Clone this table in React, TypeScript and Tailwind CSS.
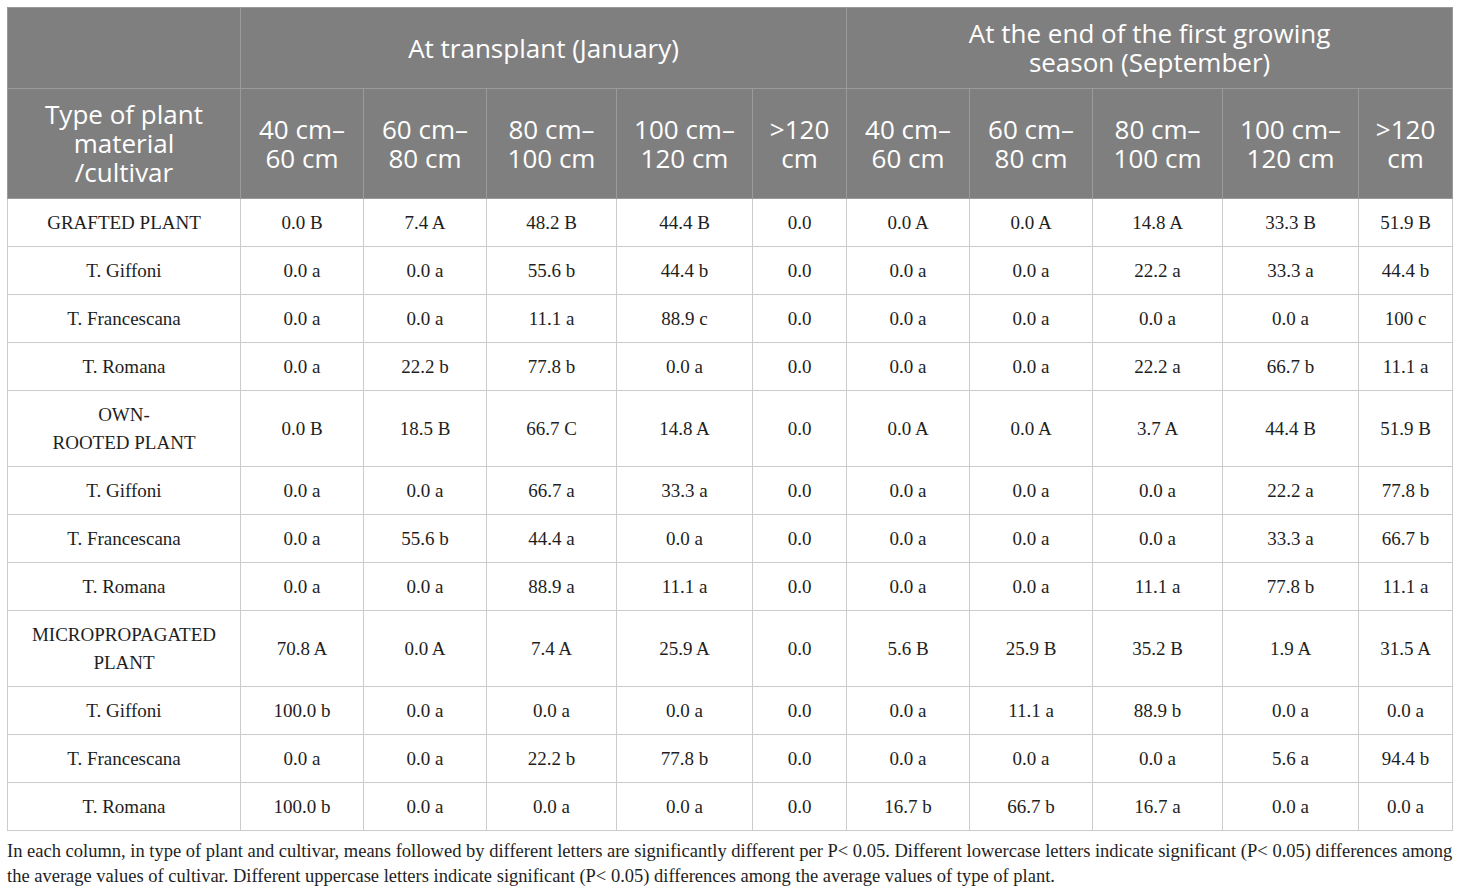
const widths = [233, 123, 123, 130, 136, 94, 123, 123, 130, 136, 94];

const sizes = [
  ['40 cm–', '60 cm'],
  ['60 cm–', '80 cm'],
  ['80 cm–', '100 cm'],
  ['100 cm–', '120 cm'],
  ['>120', 'cm'],
];

type Row = { label: string[]; values: string[]; tall?: boolean };

const rows: Row[] = [
  { label: ['GRAFTED PLANT'], values: ['0.0 B', '7.4 A', '48.2 B', '44.4 B', '0.0', '0.0 A', '0.0 A', '14.8 A', '33.3 B', '51.9 B'] },
  { label: ['T. Giffoni'], values: ['0.0 a', '0.0 a', '55.6 b', '44.4 b', '0.0', '0.0 a', '0.0 a', '22.2 a', '33.3 a', '44.4 b'] },
  { label: ['T. Francescana'], values: ['0.0 a', '0.0 a', '11.1 a', '88.9 c', '0.0', '0.0 a', '0.0 a', '0.0 a', '0.0 a', '100 c'] },
  { label: ['T. Romana'], values: ['0.0 a', '22.2 b', '77.8 b', '0.0 a', '0.0', '0.0 a', '0.0 a', '22.2 a', '66.7 b', '11.1 a'] },
  { label: ['OWN-', 'ROOTED PLANT'], tall: true, values: ['0.0 B', '18.5 B', '66.7 C', '14.8 A', '0.0', '0.0 A', '0.0 A', '3.7 A', '44.4 B', '51.9 B'] },
  { label: ['T. Giffoni'], values: ['0.0 a', '0.0 a', '66.7 a', '33.3 a', '0.0', '0.0 a', '0.0 a', '0.0 a', '22.2 a', '77.8 b'] },
  { label: ['T. Francescana'], values: ['0.0 a', '55.6 b', '44.4 a', '0.0 a', '0.0', '0.0 a', '0.0 a', '0.0 a', '33.3 a', '66.7 b'] },
  { label: ['T. Romana'], values: ['0.0 a', '0.0 a', '88.9 a', '11.1 a', '0.0', '0.0 a', '0.0 a', '11.1 a', '77.8 b', '11.1 a'] },
  { label: ['MICROPROPAGATED', 'PLANT'], tall: true, values: ['70.8 A', '0.0 A', '7.4 A', '25.9 A', '0.0', '5.6 B', '25.9 B', '35.2 B', '1.9 A', '31.5 A'] },
  { label: ['T. Giffoni'], values: ['100.0 b', '0.0 a', '0.0 a', '0.0 a', '0.0', '0.0 a', '11.1 a', '88.9 b', '0.0 a', '0.0 a'] },
  { label: ['T. Francescana'], values: ['0.0 a', '0.0 a', '22.2 b', '77.8 b', '0.0', '0.0 a', '0.0 a', '0.0 a', '5.6 a', '94.4 b'] },
  { label: ['T. Romana'], values: ['100.0 b', '0.0 a', '0.0 a', '0.0 a', '0.0', '16.7 b', '66.7 b', '16.7 a', '0.0 a', '0.0 a'] },
];

export default function App() {
  return (
    <div className="bg-white w-[1460px] h-[895px] pt-[7px] pl-[7px] font-['Liberation_Serif',serif] text-[#1e1e1e]">
      <table className="table-fixed border-collapse w-[1446px]">
        <colgroup>
          {widths.map((w, i) => (
            <col key={i} style={{ width: w }} />
          ))}
        </colgroup>
        <thead className="bg-[#7f7f7f] text-white font-['Open_Sans',sans-serif] text-[26px] leading-[29px]">
          <tr className="h-[81px]">
            <th className="border border-[#9a9a9a] font-normal" />
            <th colSpan={5} className="border border-[#9a9a9a] font-normal px-2">
              At transplant (January)
            </th>
            <th colSpan={5} className="border border-[#9a9a9a] font-normal px-2">
              At the end of the first growing
              <br />
              season (September)
            </th>
          </tr>
          <tr className="h-[110px]">
            <th className="border border-[#9a9a9a] font-normal">
              Type of plant
              <br />
              material
              <br />
              /cultivar
            </th>
            {[...sizes, ...sizes].map((s, i) => (
              <th key={i} className="border border-[#9a9a9a] font-normal">
                {s[0]}
                <br />
                {s[1]}
              </th>
            ))}
          </tr>
        </thead>
        <tbody className="text-[19px] leading-[28px]">
          {rows.map((r, i) => (
            <tr key={i} className={r.tall ? 'h-[76px]' : 'h-[48px]'}>
              <td className="border border-[#cccccc] text-center">
                {r.label.map((l, j) => (
                  <div key={j}>{l}</div>
                ))}
              </td>
              {r.values.map((v, j) => (
                <td key={j} className="border border-[#cccccc] text-center">
                  {v}
                </td>
              ))}
            </tr>
          ))}
        </tbody>
      </table>
      <p className="mt-[8px] text-[18.5px] leading-[25px] whitespace-nowrap">
        In each column, in type of plant and cultivar, means followed by different letters are significantly different per P&lt; 0.05. Different lowercase letters indicate significant (P&lt; 0.05) differences among
        <br />
        the average values of cultivar. Different uppercase letters indicate significant (P&lt; 0.05) differences among the average values of type of plant.
      </p>
    </div>
  );
}
